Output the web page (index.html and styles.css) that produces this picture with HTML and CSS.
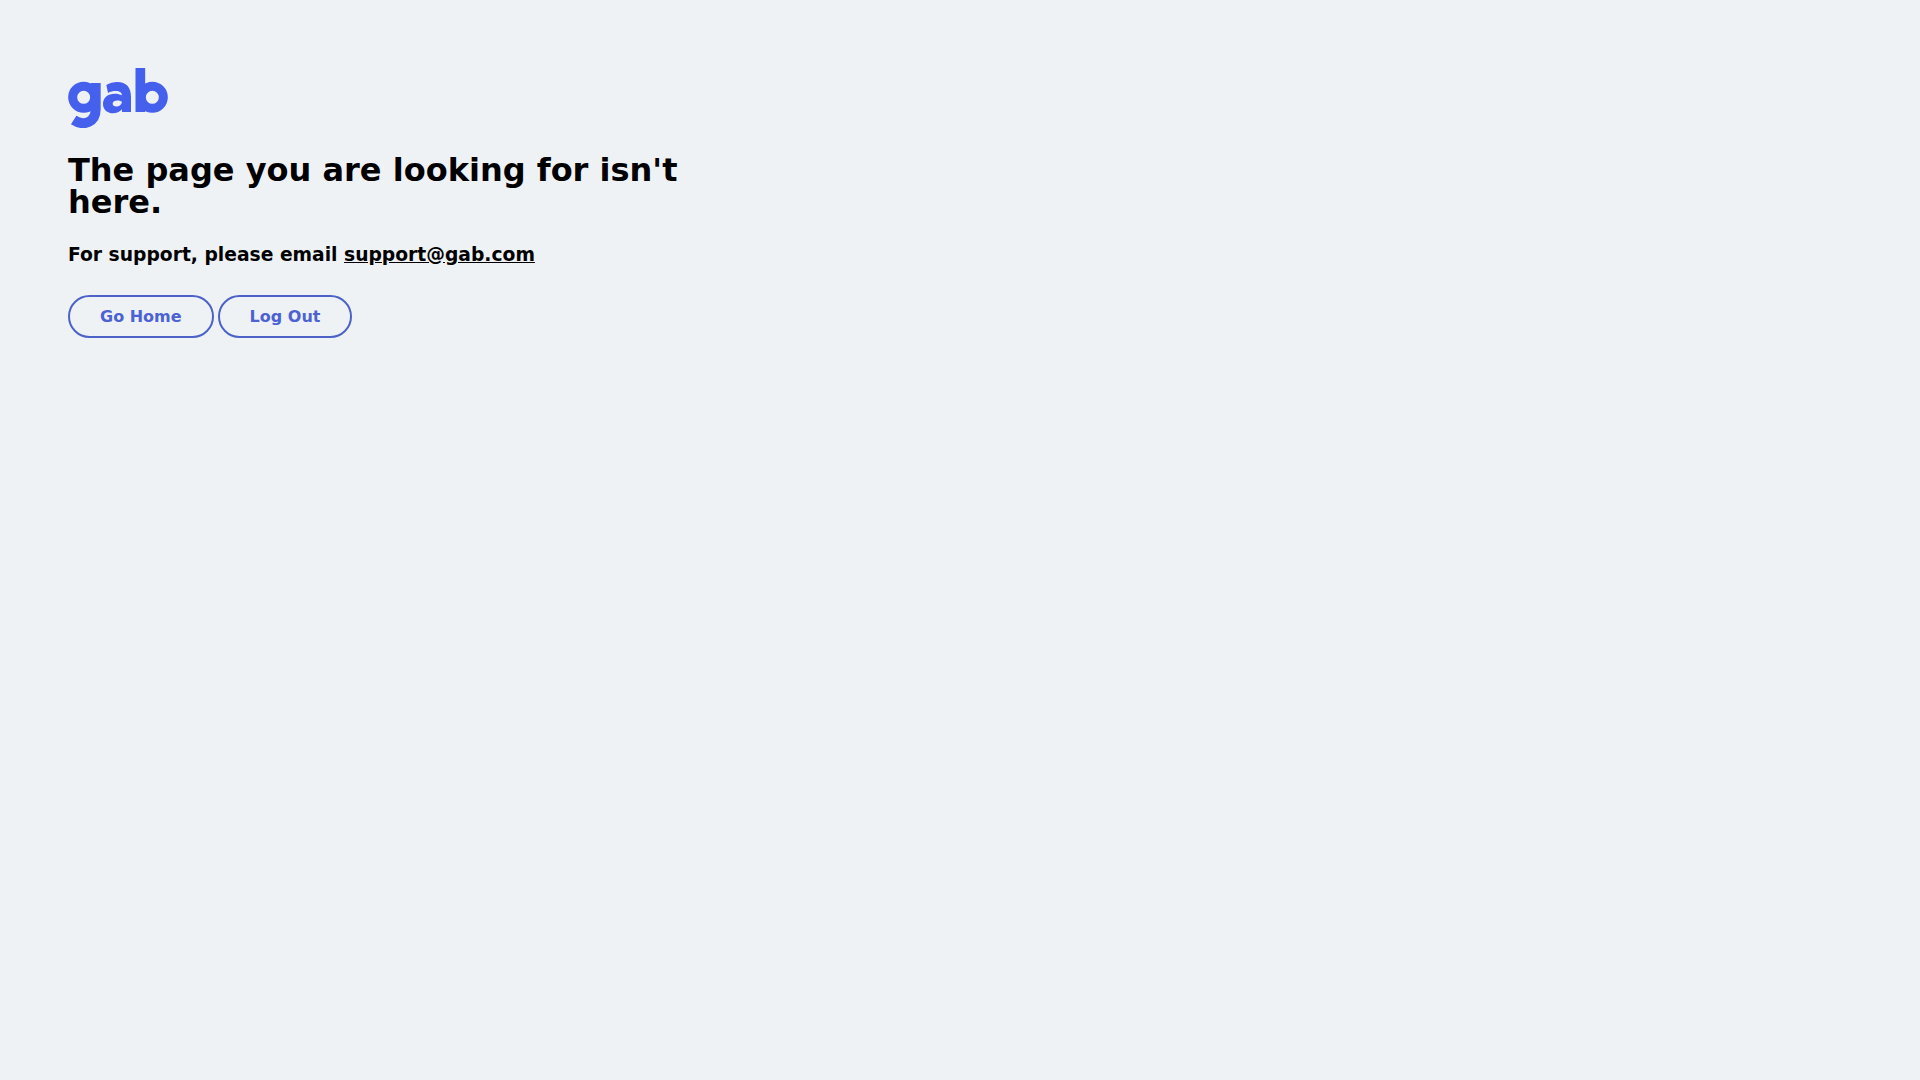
FILE: index.html
```html
<!DOCTYPE html>
<html lang="en">
<head>
<meta charset="utf-8">
<meta name="viewport" content="width=device-width, initial-scale=1">
<title>Gab</title>
<link rel="stylesheet" href="styles.css">
</head>
<body>
<main class="error-page">
  <svg class="logo" viewBox="0 0 300 180" role="img" aria-label="gab">
    <g fill="none" stroke="currentColor" stroke-width="27">
      <circle cx="47" cy="88" r="33"/>
      <path d="M83 45V124C83 163 48 176 17 156" stroke-width="30"/>
      <path d="M217 0V132" stroke-width="29"/>
      <circle cx="253" cy="88" r="33"/>
    </g>
    <path fill="currentColor" fill-rule="evenodd" d="M189 132H162V124C155 132 146 136 135 136C117 136 105 124 105 108C105 89 119 77 141 77C149 77 156 79 162 82C161 74 156 69 143 69C135 69 127 71 120 75L115 51C124 45 137 42 148 42C175 42 189 58 189 87ZM162 101C152 95 134 96 134 107C134 119 159 119 162 101Z"/>
  </svg>
  <h1 class="title">The page you are looking for isn't here.</h1>
  <h3 class="support">For support, please email <a class="support-link" href="mailto:support@gab.com">support@gab.com</a></h3>
  <div class="actions">
    <button class="button" type="button">Go Home</button>
    <button class="button" type="button">Log Out</button>
  </div>
</main>
</body>
</html>
```
FILE: styles.css
```css
body {
  margin: 0;
  background: #eef2f5;
  color: #000;
  font-family: "DejaVu Sans", sans-serif;
}

.error-page {
  box-sizing: border-box;
  max-width: 768px;
  padding: 68px;
}

.logo {
  display: block;
  width: 100px;
  height: 60px;
  color: #4560ed;
}

.title {
  margin: 26px 0;
  font-size: 32px;
  line-height: 32px;
}

.support {
  margin: 0 0 29px;
  line-height: 22px;
}

.support-link {
  color: inherit;
}

.actions {
  display: flex;
  flex-wrap: wrap;
  gap: 4px;
}

.button {
  padding: 10px 30px;
  border: 2px solid #4c62c9;
  border-radius: 22px;
  background: transparent;
  color: #4c62d4;
  font: bold 16px/19px "DejaVu Sans", sans-serif;
  cursor: pointer;
}
```
